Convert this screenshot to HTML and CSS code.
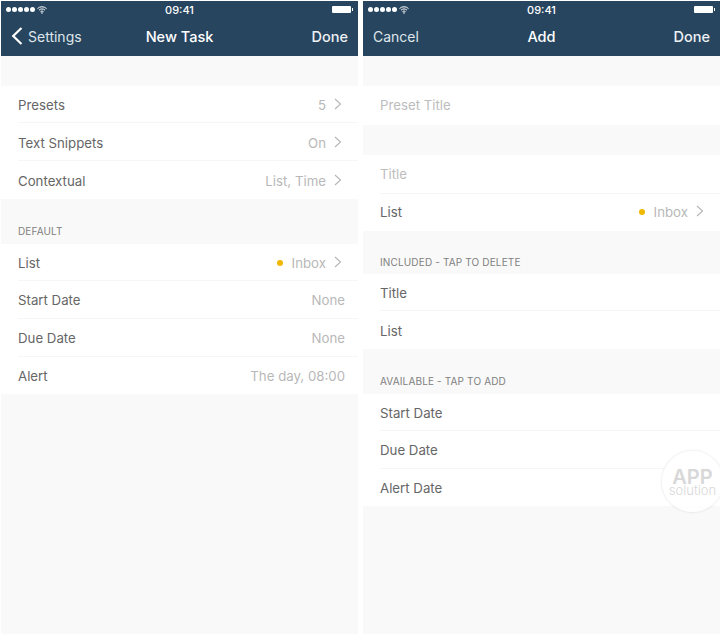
FILE: index.html
```html
<!DOCTYPE html>
<html lang="en">
<head>
    <meta charset="UTF-8">
    <meta name="viewport" content="width=device-width, initial-scale=1.0">
    <title>New Task</title>
    <link rel="stylesheet" href="styles.css">
</head>
<body>
    <div class="screens">
        <section class="phone">
            <header class="topbar">
                <div class="status">
                    <div class="signal">
                        <i></i><i></i><i></i><i></i><i></i>
                        <svg class="wifi" width="10" height="8" viewBox="0 0 10 8"><path d="M0.5 2.6a6.4 6.4 0 0 1 9 0M2 4.2a4.2 4.2 0 0 1 6 0M3.5 5.7a2.1 2.1 0 0 1 3 0" fill="none" stroke="#fff" stroke-width="1"/><path d="M5 8l-1-1.2a1.4 1.4 0 0 1 2 0z" fill="#fff"/></svg>
                    </div>
                    <span class="time">09:41</span>
                    <div class="battery"><b></b><u></u></div>
                </div>
                <nav class="navbar">
                    <a class="nav-left">
                        <svg class="back" width="12" height="18" viewBox="0 0 12 18"><path d="M10.5 1L2.2 9l8.3 8" fill="none" stroke="#fff" stroke-width="2.2"/></svg>
                        Settings
                    </a>
                    <span class="nav-title">New Task</span>
                    <a class="nav-right">Done</a>
                </nav>
            </header>
            <div class="spacer"></div>
            <ul class="group">
                <li class="row"><span>Presets</span><span class="value">5<svg class="chev" width="8" height="12" viewBox="0 0 8 12"><path d="M1 1l5.5 5-5.5 5" fill="none" stroke="#b5b5b5" stroke-width="1.1"/></svg></span></li>
                <li class="row"><span>Text Snippets</span><span class="value">On<svg class="chev" width="8" height="12" viewBox="0 0 8 12"><path d="M1 1l5.5 5-5.5 5" fill="none" stroke="#b5b5b5" stroke-width="1.1"/></svg></span></li>
                <li class="row"><span>Contextual</span><span class="value">List, Time<svg class="chev" width="8" height="12" viewBox="0 0 8 12"><path d="M1 1l5.5 5-5.5 5" fill="none" stroke="#b5b5b5" stroke-width="1.1"/></svg></span></li>
            </ul>
            <div class="label">DEFAULT</div>
            <ul class="group">
                <li class="row"><span>List</span><span class="value"><i class="dot"></i>Inbox<svg class="chev" width="8" height="12" viewBox="0 0 8 12"><path d="M1 1l5.5 5-5.5 5" fill="none" stroke="#b5b5b5" stroke-width="1.1"/></svg></span></li>
                <li class="row"><span>Start Date</span><span class="value">None</span></li>
                <li class="row"><span>Due Date</span><span class="value">None</span></li>
                <li class="row"><span>Alert</span><span class="value">The day, 08:00</span></li>
            </ul>
        </section>

        <section class="phone">
            <header class="topbar">
                <div class="status">
                    <div class="signal">
                        <i></i><i></i><i></i><i></i><i></i>
                        <svg class="wifi" width="10" height="8" viewBox="0 0 10 8"><path d="M0.5 2.6a6.4 6.4 0 0 1 9 0M2 4.2a4.2 4.2 0 0 1 6 0M3.5 5.7a2.1 2.1 0 0 1 3 0" fill="none" stroke="#fff" stroke-width="1"/><path d="M5 8l-1-1.2a1.4 1.4 0 0 1 2 0z" fill="#fff"/></svg>
                    </div>
                    <span class="time">09:41</span>
                    <div class="battery"><b></b><u></u></div>
                </div>
                <nav class="navbar">
                    <a class="nav-left">Cancel</a>
                    <span class="nav-title">Add</span>
                    <a class="nav-right">Done</a>
                </nav>
            </header>
            <div class="spacer"></div>
            <ul class="group">
                <li class="row muted"><span>Preset Title</span></li>
            </ul>
            <div class="spacer-sm"></div>
            <ul class="group">
                <li class="row muted"><span>Title</span></li>
                <li class="row"><span>List</span><span class="value"><i class="dot"></i>Inbox<svg class="chev" width="8" height="12" viewBox="0 0 8 12"><path d="M1 1l5.5 5-5.5 5" fill="none" stroke="#b5b5b5" stroke-width="1.1"/></svg></span></li>
            </ul>
            <div class="label label-short">INCLUDED - TAP TO DELETE</div>
            <ul class="group">
                <li class="row"><span>Title</span></li>
                <li class="row"><span>List</span></li>
            </ul>
            <div class="label">AVAILABLE - TAP TO ADD</div>
            <ul class="group">
                <li class="row"><span>Start Date</span></li>
                <li class="row"><span>Due Date</span></li>
                <li class="row"><span>Alert Date</span></li>
            </ul>
            <div class="stamp"><strong>APP</strong><span>solution</span></div>
        </section>
    </div>
</body>
</html>
```

FILE: styles.css
```css
* {
    box-sizing: border-box;
}

body {
    margin: 0;
    background: #fff;
    font-family: Inter, Roboto, sans-serif;
    color: #666;
    overflow: hidden;
}

.screens {
    display: flex;
    justify-content: space-between;
    height: 636px;
    padding: 1px 0 2px 1px;
}

.phone {
    position: relative;
    width: 357px;
    background: #f9f9f9;
    overflow: hidden;
}

.topbar {
    height: 55px;
    background: #27455f;
    color: #fff;
}

.status {
    display: grid;
    grid-template-columns: 1fr auto 1fr;
    align-items: center;
    height: 17px;
    padding: 0 5px;
}

.signal {
    display: flex;
    align-items: center;
    gap: 1px;
}

.signal i {
    width: 5px;
    height: 5px;
    border-radius: 50%;
    background: #fff;
}

.wifi {
    margin-left: 1px;
}

.time {
    font-size: 11px;
    font-weight: 500;
}

.battery {
    display: flex;
    align-items: center;
    justify-content: flex-end;
}

.battery b {
    width: 19px;
    height: 7px;
    background: #fff;
    border-radius: 1px;
}

.battery u {
    width: 1px;
    height: 3px;
    margin-left: 1px;
    background: #fff;
}

.navbar {
    display: grid;
    grid-template-columns: 1fr auto 1fr;
    align-items: center;
    height: 36px;
    padding: 0 10px;
    font-size: 14.5px;
}

.nav-left {
    display: flex;
    align-items: center;
    gap: 5px;
    font-size: 14px;
    color: #dfe5ea;
}

.nav-title {
    font-weight: 500;
}

.nav-right {
    justify-self: end;
    font-weight: 500;
    color: #eef1f4;
}

.spacer {
    height: 30px;
}

.spacer-sm {
    height: 30.5px;
}

.group {
    margin: 0;
    padding: 0 0 0 17px;
    list-style: none;
    background: #fff;
}

.row {
    display: flex;
    align-items: center;
    justify-content: space-between;
    height: 38px;
    padding: 1px 13px 0 0;
    font-size: 13.25px;
    box-shadow: 0 -1px 0 #f6f6f6;
}

.row:first-child {
    height: 37px;
    box-shadow: none;
}

.row:last-child {
    height: 37.5px;
    padding-top: 2px;
}

.row.muted {
    height: 38.5px;
    padding-top: 0;
    color: #bdbdbd;
}

.row.muted + .row {
    padding-top: 0;
}

.value {
    display: flex;
    align-items: center;
    color: #b8b8b8;
}

.chev {
    margin: -2px 3px 0 8px;
}

.dot {
    width: 6px;
    height: 6px;
    margin-right: 9px;
    border-radius: 50%;
    background: #f0b800;
}

.label {
    height: 45px;
    padding: 26px 0 0 17px;
    font-size: 10px;
    letter-spacing: 0.15px;
    color: #808080;
}

.label-short {
    height: 43px;
    padding-top: 25px;
}

.stamp {
    position: absolute;
    top: 450px;
    right: -3px;
    display: flex;
    flex-direction: column;
    align-items: center;
    justify-content: center;
    width: 61px;
    height: 61px;
    padding-top: 3px;
    border-radius: 50%;
    background: rgba(255, 255, 255, 0.85);
    box-shadow: 0 0 2px 1px rgba(0, 0, 0, 0.07);
    color: #d8d8d8;
}

.stamp strong {
    font-size: 20px;
    font-weight: 600;
    line-height: 15px;
}

.stamp span {
    font-size: 13px;
    font-weight: 300;
    line-height: 11px;
}
```
